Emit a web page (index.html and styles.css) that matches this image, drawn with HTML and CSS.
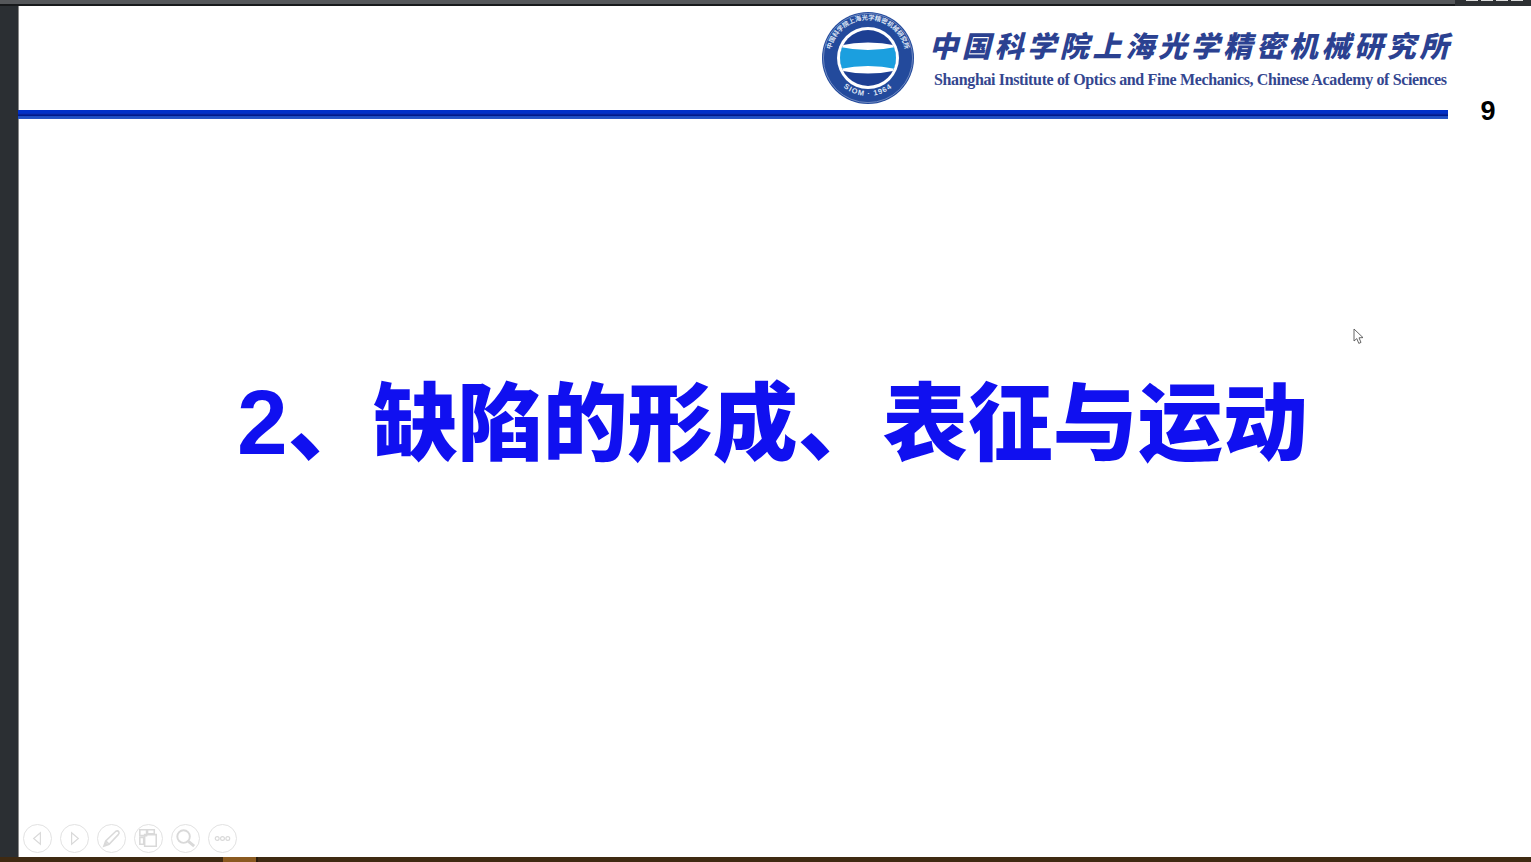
FILE: index.html
```html
<!DOCTYPE html>
<html lang="zh-CN">
<head>
  <meta charset="UTF-8" />
  <meta name="viewport" content="width=device-width, initial-scale=1.0" />
  <title>缺陷的形成、表征与运动</title>
  <link rel="stylesheet" href="styles.css">
</head>
<body>
  <div class="top-bar"></div>
  <div class="window-tab"><span></span><span></span><span></span><span></span></div>

  <div class="stage">
    <div class="side-bar"></div>

    <main class="slide">
      <!-- Cabecera con logo -->
      <header class="slide-header">
        <div class="header-main">
          <div class="brand">
            <svg class="emblem" viewBox="0 0 92 92" width="92" height="92">
              <defs>
                <path id="ringTop" d="M8.5 52 A38 38 0 1 1 83.5 52" />
                <path id="ringBottom" d="M10 60 A39 39 0 0 0 82 60" />
                <clipPath id="innerDisc"><circle cx="46" cy="46" r="28" /></clipPath>
              </defs>
              <circle cx="46" cy="46" r="46" fill="#234a9c" />
              <circle cx="46" cy="46" r="44.6" fill="none" stroke="#8fa3d0" stroke-width="0.7" />
              <circle cx="46" cy="46" r="31" fill="#fff" />
              <g clip-path="url(#innerDisc)">
                <rect x="16" y="16" width="60" height="60" fill="#1d3f93" />
                <path d="M16 34 Q46 27 76 34 L76 58 Q46 65 16 58 Z" fill="#fff" />
                <path d="M18 35 Q46 41 74 35 L74 57 Q46 51 18 57 Z" fill="#1b9fdf" />
              </g>
              <text class="emblem-cn"><textPath href="#ringTop" startOffset="50%" text-anchor="middle">中国科学院上海光学精密机械研究所</textPath></text>
              <text class="emblem-en"><textPath href="#ringBottom" startOffset="50%" text-anchor="middle">SIOM · 1964</textPath></text>
            </svg>
            <div class="brand-text">
              <div class="brand-cn">中国科学院上海光学精密机械研究所</div>
              <div class="brand-en">Shanghai Institute of Optics and Fine Mechanics, Chinese Academy of Sciences</div>
            </div>
          </div>
          <div class="rule"></div>
        </div>
        <div class="page-number">9</div>
      </header>

      <!-- Título de la sección -->
      <section class="slide-body">
        <h1 class="slide-title"><span class="title-num">2</span>、缺陷的形成、表征与运动</h1>
      </section>

      <!-- Controles de la presentación -->
      <div class="controls">
        <button class="ctrl">
          <svg viewBox="0 0 28 28"><path d="M17 8 L10 14 L17 20 Z" /></svg>
        </button>
        <button class="ctrl">
          <svg viewBox="0 0 28 28"><path d="M11 8 L18 14 L11 20 Z" /></svg>
        </button>
        <button class="ctrl">
          <svg viewBox="0 0 28 28"><path d="M6 22 L8 16.5 L18.5 6.5 Q20.5 5.5 21.5 7 Q22.5 8.5 21 10 L11.5 20 Z M8 16.5 L11.5 20 M6 22 L9 19" stroke-width="1.6" /></svg>
        </button>
        <button class="ctrl">
          <svg viewBox="0 0 28 28"><path d="M5 5 H12 V11 H5 Z M13 5 H20 V9 H13 Z M5 13 H9 V20 H5 Z M10 10 H22 V22 H10 Z" stroke-width="1.6" /></svg>
        </button>
        <button class="ctrl">
          <svg viewBox="0 0 28 28"><circle cx="12" cy="12" r="6.5" stroke-width="2" /><path d="M17 17 L23 22" stroke-width="3" /></svg>
        </button>
        <button class="ctrl">
          <svg viewBox="0 0 28 28"><circle cx="8.5" cy="14" r="2" /><circle cx="14" cy="14" r="2" /><circle cx="19.5" cy="14" r="2" /></svg>
        </button>
      </div>

      <svg class="cursor" viewBox="0 0 12 17" width="12" height="17">
        <path d="M1 1 V13 L3.8 10.6 L5.8 15.4 L8 14.4 L6 9.8 L10 9.6 Z" fill="#fff" stroke="#555" stroke-width="0.9" />
      </svg>
    </main>
  </div>

  <div class="bottom-bar"><div class="bottom-patch"></div></div>
</body>
</html>
```

FILE: styles.css
```css
html, body {
  height: 100%;
}
body {
  margin: 0;
  display: flex;
  flex-direction: column;
  overflow: hidden;
  background: #fff;
  font-family: "Liberation Sans", "Noto Sans CJK SC", sans-serif;
}
.top-bar {
  height: 4px;
  background: #55575a;
  border-bottom: 2px solid #17191b;
  flex: none;
}
/* Pestaña oscura de arriba a la derecha */
.window-tab {
  position: absolute;
  top: 0;
  right: 0;
  width: 76px;
  height: 13px;
  background: #2d3033;
  display: flex;
  gap: 3px;
  padding-left: 11px;
  box-sizing: border-box;
}
.window-tab span {
  width: 12px;
  height: 1px;
  background: #ddd;
}
.stage {
  flex: 1;
  display: flex;
  min-height: 0;
}
.side-bar {
  width: 19px;
  flex: none;
  background: #2b2f33;
  border-right: 1px solid #8a8a8a;
  box-sizing: border-box;
}
.slide {
  flex: 1;
  position: relative;
  display: flex;
  flex-direction: column;
  background: #fff;
}
/* Cabecera */
.slide-header {
  display: flex;
  flex: none;
}
.header-main {
  width: 1430px;
  margin-left: -1px;
  flex: none;
}
.brand {
  height: 104px;
  display: flex;
  justify-content: flex-end;
  align-items: flex-start;
  gap: 18px;
}
.emblem {
  display: block;
  margin-top: 6px;
}
.emblem-cn {
  font-family: "Noto Sans CJK SC", sans-serif;
  font-size: 6.4px;
  font-weight: 700;
  fill: #dfe6f5;
}
.emblem-en {
  font-family: "Liberation Sans", sans-serif;
  font-size: 7.4px;
  font-weight: 700;
  letter-spacing: 1px;
  fill: #dfe6f5;
}
.brand-text {
  width: 516px;
}
.brand-cn {
  margin-top: 20px;
  margin-left: -3px;
  font-family: "Noto Sans CJK SC", sans-serif;
  font-size: 29px;
  line-height: 36px;
  font-weight: 900;
  font-style: italic;
  letter-spacing: 3.7px;
  white-space: nowrap;
  color: #2b4191;
}
.brand-en {
  margin-top: 9px;
  padding-left: 2px;
  font-family: "Liberation Serif", serif;
  font-size: 16px;
  line-height: 18px;
  font-weight: 700;
  letter-spacing: -0.36px;
  white-space: nowrap;
  color: #33468f;
}
.rule {
  height: 9px;
  background: linear-gradient(#0030c8 0, #0030c8 33%, #0a2ab0 45%, #001a88 55%, #001a88 62%, #1b4cc4 72%, #2a58c4 100%);
}
.page-number {
  flex: 1;
  text-align: center;
  padding-top: 90px;
  padding-right: 3px;
  font-size: 27px;
  line-height: 30px;
  font-weight: 700;
  color: #000;
}
/* Título */
.slide-body {
  flex: 1;
  display: flex;
  justify-content: flex-start;
}
.slide-title {
  margin: 241px 0 0 218px;
  font-family: "Noto Sans CJK SC", sans-serif;
  font-size: 85px;
  line-height: 100px;
  font-weight: 900;
  white-space: nowrap;
  color: #1010f0;
}
.title-num {
  font-family: "Liberation Sans", sans-serif;
  font-size: 91px;
  font-weight: 700;
}
/* Controles */
.controls {
  position: absolute;
  left: 4px;
  bottom: 4px;
  display: flex;
  gap: 8px;
}
.ctrl {
  width: 29px;
  height: 29px;
  padding: 0;
  border: 1px solid #e2e2e2;
  border-radius: 50%;
  background: transparent;
  box-sizing: border-box;
}
.ctrl svg {
  display: block;
  width: 100%;
  height: 100%;
  fill: none;
  stroke: #d9d9d9;
  stroke-width: 1.2;
}
.cursor {
  position: absolute;
  left: 1334px;
  top: 322px;
}
.bottom-bar {
  height: 5px;
  flex: none;
  background: #3f2a12;
  position: relative;
}
.bottom-patch {
  position: absolute;
  left: 223px;
  width: 33px;
  height: 100%;
  background: #8a5a20;
  border-right: 2px solid #2a1c0c;
}
```
